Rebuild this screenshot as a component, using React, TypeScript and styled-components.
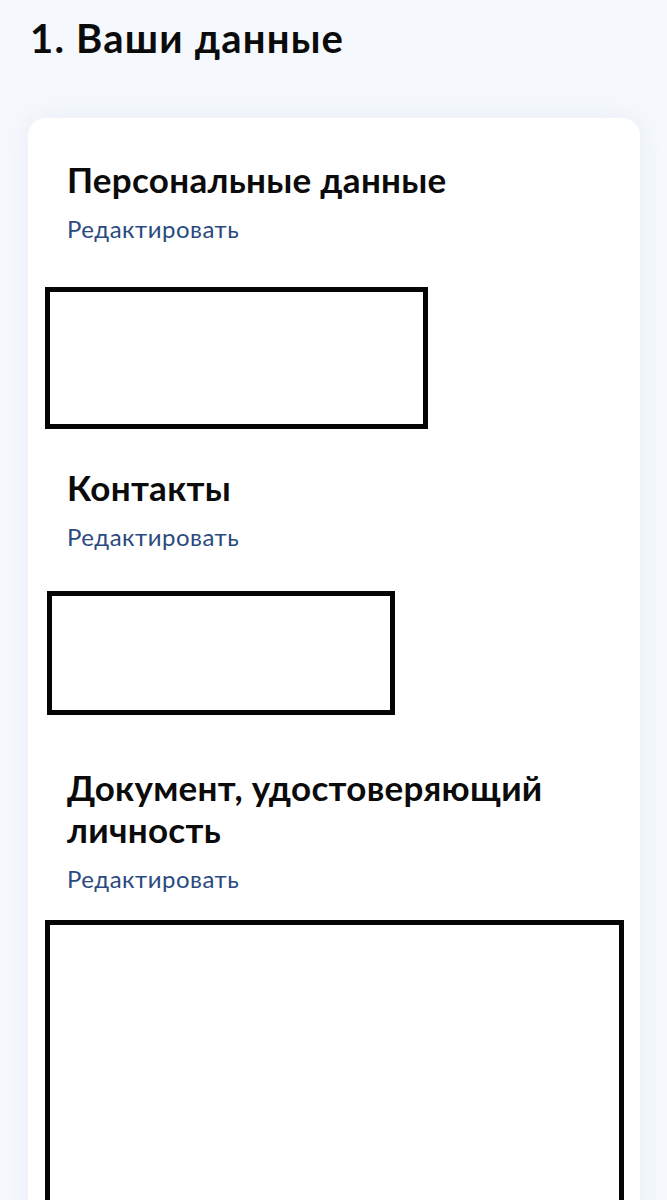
import React from 'react';
import styled, { createGlobalStyle } from 'styled-components';

const GlobalStyle = createGlobalStyle`
    html, body {
        margin: 0;
        padding: 0;
        background: #f5f8fc;
    }
    body {
        font-family: Lato, 'Noto Sans', sans-serif;
        color: #0b0b0b;
    }
`;

const Page = styled.div`
    padding: 12px 27px 0 28px;
    min-height: 1200px;
    box-sizing: border-box;
`;

const PageTitle = styled.h1`
    margin: 0 0 0 2px;
    font-size: 40px;
    font-weight: 700;
    line-height: 52px;
    letter-spacing: 1.2px;
`;

const Card = styled.div`
    margin-top: 54px;
    background: #ffffff;
    border-radius: 18px;
    padding: 40px 16px 40px 17px;
    box-shadow: 0 0 24px rgba(200, 215, 235, 0.25);
`;

const Section = styled.section<{ $gap: number }>`
    display: flex;
    flex-direction: column;
    margin-top: ${(p) => p.$gap}px;
`;

const SectionTitle = styled.h2`
    margin: 0;
    padding-left: 22px;
    font-size: 35px;
    font-weight: 700;
    line-height: 42px;
    letter-spacing: 0.3px;
`;

const EditLink = styled.a`
    margin-top: 14px;
    padding-left: 22px;
    font-size: 24px;
    line-height: 30px;
    letter-spacing: 0.5px;
    color: #2a4a80;
    text-decoration: none;
    cursor: pointer;
`;

const Redacted = styled.div<{ $width: number; $height: number; $shift: number; $top: number }>`
    margin-top: ${(p) => p.$top}px;
    margin-left: ${(p) => p.$shift}px;
    width: ${(p) => p.$width}px;
    height: ${(p) => p.$height}px;
    box-sizing: border-box;
    border: 5px solid #050505;
    background: #ffffff;
`;

const sections = [
    { title: 'Персональные данные', gap: 0, box: { w: 383, h: 142, shift: 0, top: 43 } },
    { title: 'Контакты', gap: 37, box: { w: 348, h: 124, shift: 2, top: 39 } },
    { title: 'Документ, удостоверяющий личность', gap: 51, box: { w: 579, h: 300, shift: 0, top: 26 } },
];

export default function App() {
    return (
        <>
            <GlobalStyle />
            <Page>
                <PageTitle>1. Ваши данные</PageTitle>
                <Card>
                    {sections.map((s) => (
                        <Section key={s.title} $gap={s.gap}>
                            <SectionTitle>{s.title}</SectionTitle>
                            <EditLink>Редактировать</EditLink>
                            <Redacted
                                $width={s.box.w}
                                $height={s.box.h}
                                $shift={s.box.shift}
                                $top={s.box.top}
                            />
                        </Section>
                    ))}
                </Card>
            </Page>
        </>
    );
}
